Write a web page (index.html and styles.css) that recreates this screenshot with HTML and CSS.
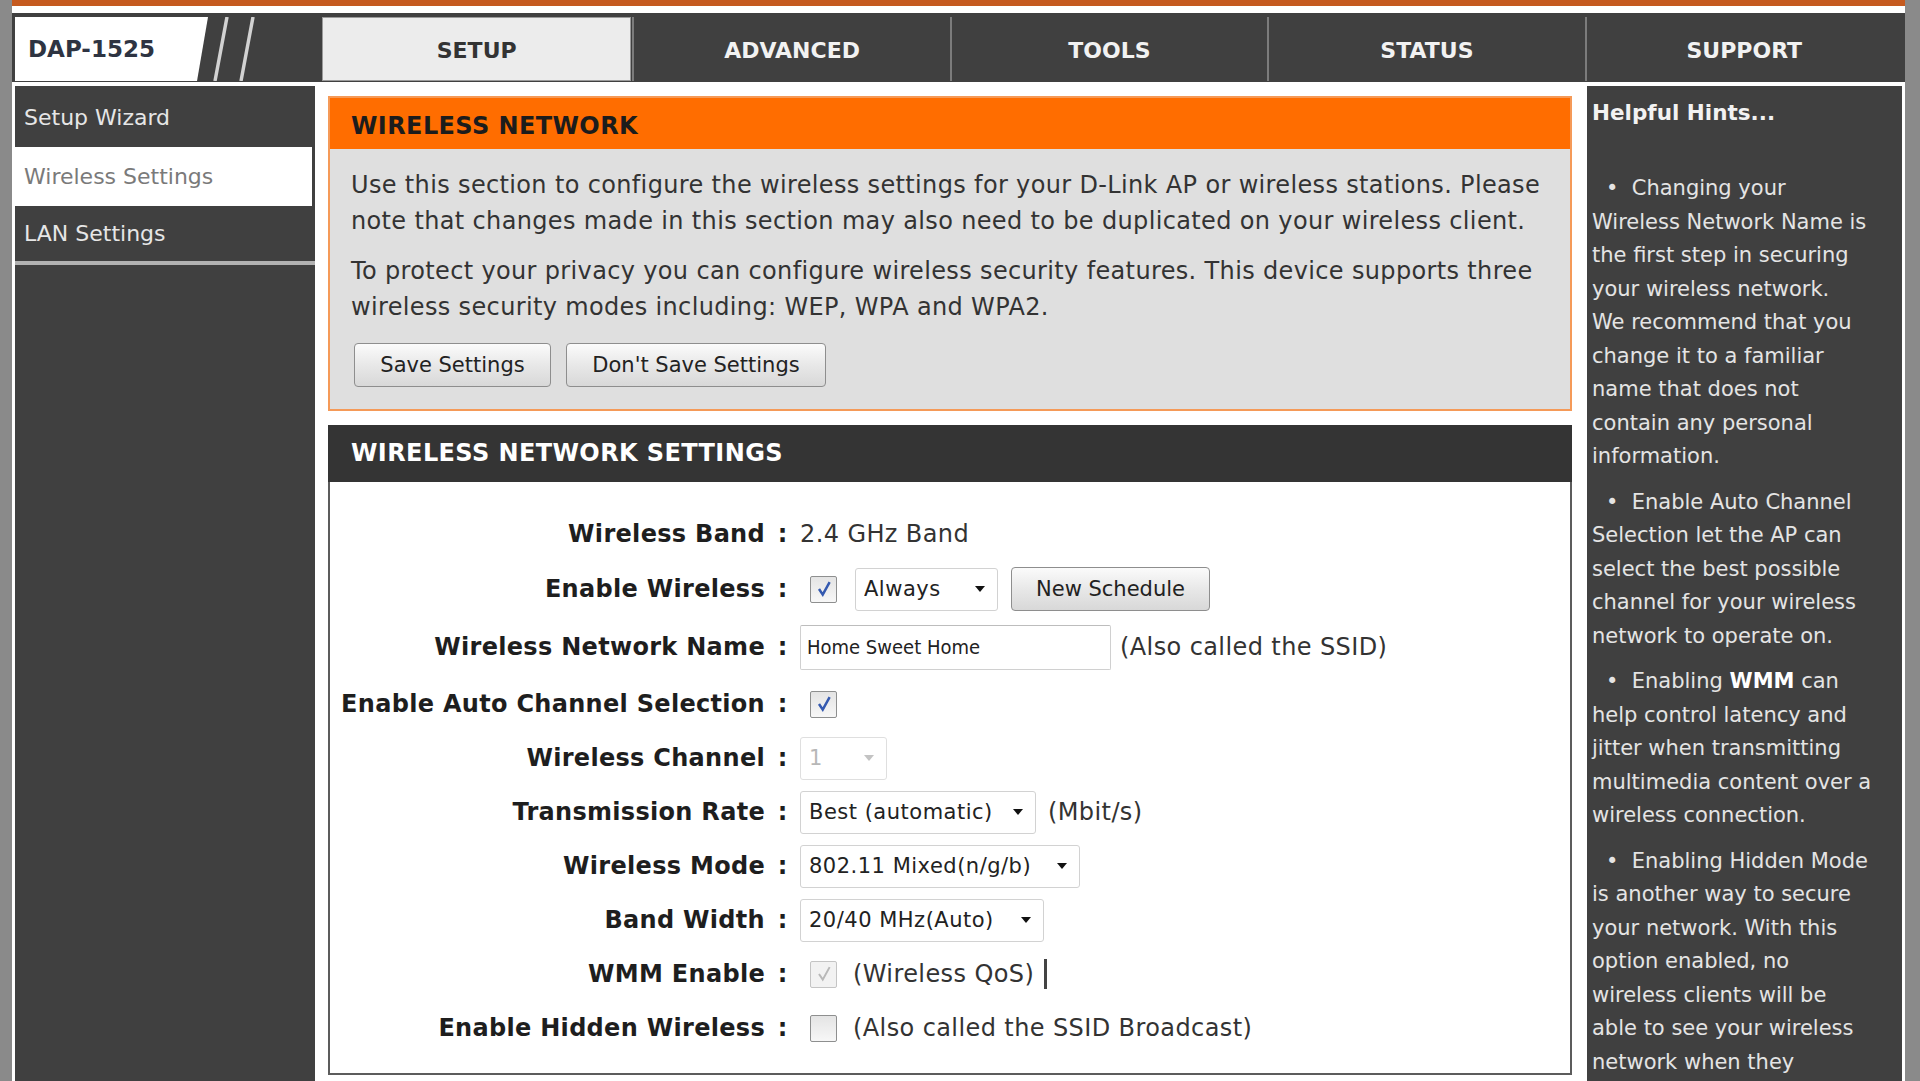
FILE: index.html
```html
<!DOCTYPE html>
<html lang="en">
<head>
    <meta charset="UTF-8">
    <title>D-Link DAP-1525 | Setup | Wireless Settings</title>
    <link rel="stylesheet" href="styles.css">
</head>
<body>

<div class="page">
    <div class="top-strip"></div>

    <!-- product name + main tabs -->
    <div class="header">
        <div class="brand">
            <div class="model">DAP-1525</div>
            <svg class="slashes" width="60" height="64" viewBox="0 0 60 64">
                <line x1="19" y1="0" x2="7" y2="64" stroke="#d2d2d2" stroke-width="3.5"/>
                <line x1="45" y1="0" x2="33" y2="64" stroke="#d2d2d2" stroke-width="3.5"/>
            </svg>
        </div>
        <div class="tab active">SETUP</div>
        <div class="tab">ADVANCED</div>
        <div class="tab">TOOLS</div>
        <div class="tab">STATUS</div>
        <div class="tab">SUPPORT</div>
    </div>

    <div class="layout">
        <!-- left menu -->
        <div class="sidenav">
            <a class="nav-item">Setup Wizard</a>
            <a class="nav-item active">Wireless Settings</a>
            <a class="nav-item last">LAN Settings</a>
            <div class="nav-sep"></div>
        </div>

        <div class="content">
            <div class="box box-intro">
                <h2>WIRELESS NETWORK</h2>
                <div class="box-body">
                    <p>Use this section to configure the wireless settings for your D-Link AP or wireless stations. Please note that changes made in this section may also need to be duplicated on your wireless client.</p>
                    <p>To protect your privacy you can configure wireless security features. This device supports three wireless security modes including: WEP, WPA and WPA2.</p>
                    <div class="actions">
                        <button type="button" class="btn btn-save">Save Settings</button>
                        <button type="button" class="btn btn-cancel">Don't Save Settings</button>
                    </div>
                </div>
            </div>

            <div class="box box-settings">
                <h2>WIRELESS NETWORK SETTINGS</h2>
                <div class="box-body">
                    <div class="row">
                        <label>Wireless Band</label><span class="colon">:</span>
                        <div class="value">2.4 GHz Band</div>
                    </div>
                    <div class="row row-b">
                        <label>Enable Wireless</label><span class="colon">:</span>
                        <div class="value">
                            <input type="checkbox" class="chk" checked>
                            <select class="sel sel-schedule"><option>Always</option></select>
                            <button type="button" class="btn btn-schedule">New Schedule</button>
                        </div>
                    </div>
                    <div class="row row-c">
                        <label>Wireless Network Name</label><span class="colon">:</span>
                        <div class="value">
                            <input type="text" class="txt" value="Home Sweet Home">
                            <span class="note note-ssid">(Also called the SSID)</span>
                        </div>
                    </div>
                    <div class="row">
                        <label>Enable Auto Channel Selection</label><span class="colon">:</span>
                        <div class="value"><input type="checkbox" class="chk" checked></div>
                    </div>
                    <div class="row">
                        <label>Wireless Channel</label><span class="colon">:</span>
                        <div class="value">
                            <select class="sel sel-channel" disabled><option>1</option></select>
                        </div>
                    </div>
                    <div class="row">
                        <label>Transmission Rate</label><span class="colon">:</span>
                        <div class="value">
                            <select class="sel sel-rate"><option>Best (automatic)</option></select>
                            <span class="note note-rate">(Mbit/s)</span>
                        </div>
                    </div>
                    <div class="row">
                        <label>Wireless Mode</label><span class="colon">:</span>
                        <div class="value">
                            <select class="sel sel-mode"><option>802.11 Mixed(n/g/b)</option></select>
                        </div>
                    </div>
                    <div class="row">
                        <label>Band Width</label><span class="colon">:</span>
                        <div class="value">
                            <select class="sel sel-bw"><option>20/40 MHz(Auto)</option></select>
                        </div>
                    </div>
                    <div class="row">
                        <label>WMM Enable</label><span class="colon">:</span>
                        <div class="value">
                            <input type="checkbox" class="chk" checked disabled>
                            <span class="note note-chk">(Wireless QoS)</span>
                            <span class="caret"></span>
                        </div>
                    </div>
                    <div class="row">
                        <label>Enable Hidden Wireless</label><span class="colon">:</span>
                        <div class="value">
                            <input type="checkbox" class="chk">
                            <span class="note note-chk">(Also called the SSID Broadcast)</span>
                        </div>
                    </div>
                </div>
            </div>
        </div>

        <!-- right column -->
        <div class="hints">
            <h3>Helpful Hints...</h3>
            <p>&bull;&nbsp; Changing your<br>Wireless Network Name is<br>the first step in securing<br>your wireless network.<br>We recommend that you<br>change it to a familiar<br>name that does not<br>contain any personal<br>information.</p>
            <p>&bull;&nbsp; Enable Auto Channel<br>Selection let the AP can<br>select the best possible<br>channel for your wireless<br>network to operate on.</p>
            <p>&bull;&nbsp; Enabling <b>WMM</b> can<br>help control latency and<br>jitter when transmitting<br>multimedia content over a<br>wireless connection.</p>
            <p>&bull;&nbsp; Enabling Hidden Mode<br>is another way to secure<br>your network. With this<br>option enabled, no<br>wireless clients will be<br>able to see your wireless<br>network when they</p>
        </div>
    </div>
</div>

</body>
</html>
```

FILE: styles.css
```css
html, body {
    height: 100%;
}
body {
    margin: 0;
    background-color: #8a8a8a;
    font-family: "DejaVu Sans", "Liberation Sans", sans-serif;
    overflow: hidden;
}
.page {
    margin-left: 12px;
    width: 1893px;
    height: 1081px;
    padding: 0 3px;
    box-sizing: border-box;
    background-color: #fff;
}
.top-strip {
    height: 6px;
    margin: 0 -3px 7px;
    background-color: #c55a1f;
}

/* header */
.header {
    display: grid;
    grid-template-columns: 300px repeat(5, 1fr);
    height: 69px;
    margin: 0 -3px;
    padding: 4px 3px 1px;
    box-sizing: border-box;
    background-color: #404040;
}
.brand {
    display: flex;
}
.model {
    width: 193px;
    padding-left: 13px;
    box-sizing: border-box;
    display: flex;
    align-items: center;
    background-color: #fff;
    clip-path: polygon(0 0, 193px 0, 182px 100%, 0 100%);
    color: #2e3442;
    font-size: 23px;
    font-weight: bold;
}
.slashes {
    display: block;
}
.tab {
    display: flex;
    align-items: center;
    justify-content: center;
    padding-top: 2px;
    border-left: 2px solid #7c7c7c;
    color: #f2f2f2;
    font-size: 22px;
    font-weight: bold;
}
.tab.active {
    margin: 0 1px 0 0;
    border-left: 7px solid #404040;
    background-color: #ececec;
    box-shadow: inset 0 0 0 1px #9a9a9a;
    color: #333;
}

/* columns */
.layout {
    display: grid;
    grid-template-columns: 300px 1fr 315px;
    height: 995px;
    margin-top: 4px;
}
.sidenav {
    padding-top: 2px;
    background-color: #404040;
}
.nav-item {
    display: flex;
    align-items: center;
    height: 59px;
    padding-left: 9px;
    color: #e6e6e6;
    font-size: 22px;
}
.nav-item.active {
    margin-right: 3px;
    background-color: #fff;
    color: #7a7a7a;
}
.nav-item.last {
    height: 55px;
}
.nav-sep {
    height: 4px;
    background-color: #b2b2b2;
}

.content {
    margin: 0 15px 0 13px;
    padding-top: 10px;
}
.box h2 {
    margin: 0;
    padding-left: 21px;
    font-size: 24px;
    font-weight: bold;
    letter-spacing: 0.4px;
}
.box-intro {
    border: 2px solid #f59a58;
}
.box-intro h2 {
    height: 51px;
    padding-top: 5px;
    box-sizing: border-box;
    line-height: 46px;
    background-color: #ff6d00;
    color: #1c1c1c;
}
.box-intro .box-body {
    padding: 18px 14px 22px 21px;
    background-color: #dfdfdf;
}
.box-intro p {
    margin: 0 0 14px;
    font-size: 24px;
    line-height: 36px;
    letter-spacing: 0.35px;
    color: #333;
}
.actions {
    display: flex;
    gap: 15px;
    margin-top: 18px;
    padding-left: 3px;
}
.btn {
    height: 44px;
    padding: 0 18px;
    border: 1px solid #8e8e8e;
    border-radius: 4px;
    background: linear-gradient(#fbfbfb, #e8e8e8 50%, #d8d8d8);
    font-family: inherit;
    font-size: 21px;
    color: #222;
}
.btn-save {
    width: 197px;
}
.btn-cancel {
    width: 260px;
}

.box-settings {
    margin-top: 14px;
    border: 2px solid #5c5c5c;
    border-top: none;
}
.box-settings h2 {
    height: 57px;
    line-height: 57px;
    margin: 0 -2px;
    padding-left: 23px;
    background-color: #343434;
    color: #fff;
}
.box-settings .box-body {
    padding: 25px 0 18px;
}
.row {
    display: grid;
    grid-template-columns: 435px 35px 1fr;
    align-items: center;
    height: 54px;
}
.row-b {
    height: 56px;
}
.row-c {
    height: 60px;
}
.row label {
    text-align: right;
    font-size: 24px;
    font-weight: bold;
    letter-spacing: 0.3px;
    color: #1e1e1e;
    white-space: nowrap;
}
.colon {
    text-align: center;
    font-size: 24px;
    font-weight: bold;
    color: #1e1e1e;
}
.value {
    display: flex;
    align-items: center;
    font-size: 24px;
    letter-spacing: 0.4px;
    color: #333;
    white-space: nowrap;
}

.chk {
    appearance: none;
    flex: none;
    width: 27px;
    height: 27px;
    margin: 0 0 0 10px;
    border: 1px solid #8e8f8f;
    border-radius: 2px;
    background: linear-gradient(#e4e4e4, #f7f7f7);
}
.chk:checked {
    background: url("data:image/svg+xml,%3Csvg xmlns='http://www.w3.org/2000/svg' viewBox='0 0 16 16'%3E%3Cpath d='M4 8 L7 12.5 L12.5 2.5' fill='none' stroke='%23355ab0' stroke-width='2'/%3E%3C/svg%3E") center / 20px no-repeat, linear-gradient(#e4e4e4, #f7f7f7);
}
.chk:disabled {
    border-color: #c4c4c4;
}
.chk:checked:disabled {
    background: url("data:image/svg+xml,%3Csvg xmlns='http://www.w3.org/2000/svg' viewBox='0 0 16 16'%3E%3Cpath d='M4 8 L7 12.5 L12.5 2.5' fill='none' stroke='%23b8b8b8' stroke-width='1.6'/%3E%3C/svg%3E") center / 20px no-repeat, #f2f2f2;
}

.sel {
    appearance: none;
    flex: none;
    height: 43px;
    padding: 0 30px 0 8px;
    border: 1px solid #d2d2d2;
    border-radius: 3px;
    background: #fff url("data:image/svg+xml,%3Csvg xmlns='http://www.w3.org/2000/svg' viewBox='0 0 12 8'%3E%3Cpath d='M1 1 L11 1 L6 7 Z' fill='%23111'/%3E%3C/svg%3E") right 11px center / 12px 8px no-repeat;
    font-family: inherit;
    font-size: 21px;
    letter-spacing: 0.5px;
    color: #222;
}
.sel:disabled {
    background-image: url("data:image/svg+xml,%3Csvg xmlns='http://www.w3.org/2000/svg' viewBox='0 0 12 8'%3E%3Cpath d='M1 1 L11 1 L6 7 Z' fill='%23aaa'/%3E%3C/svg%3E");
    color: #9a9a9a;
}
.sel-schedule {
    width: 143px;
    margin-left: 18px;
}
.sel-channel {
    width: 87px;
}
.sel-rate {
    width: 236px;
}
.sel-mode {
    width: 280px;
}
.sel-bw {
    width: 244px;
}
.btn-schedule {
    width: 199px;
    margin-left: 13px;
    letter-spacing: 0;
}
.txt {
    flex: none;
    width: 311px;
    height: 45px;
    padding: 0 6px;
    box-sizing: border-box;
    border: 1px solid #d0d0d0;
    border-top-color: #bdbdbd;
    border-radius: 2px;
    font-family: "DejaVu Sans Condensed", "Liberation Sans", sans-serif;
    font-size: 20px;
    letter-spacing: 0;
    color: #222;
}
.note-ssid {
    margin-left: 9px;
}
.note-rate {
    margin-left: 12px;
}
.note-chk {
    margin-left: 16px;
}
.caret {
    width: 3px;
    height: 30px;
    margin-left: 10px;
    background-color: #444;
}

/* helpful hints */
.hints {
    padding: 12px 8px 0 5px;
    overflow: hidden;
    background-color: #404040;
    color: #e4e4e4;
    font-size: 21px;
}
.hints h3 {
    margin: 0 0 44px;
    font-size: 21.5px;
    line-height: 30px;
    color: #f2f2f2;
}
.hints p {
    margin: 0 0 12px;
    line-height: 33.5px;
    white-space: nowrap;
    text-indent: 14px;
}
.hints b {
    color: #fff;
}
```
